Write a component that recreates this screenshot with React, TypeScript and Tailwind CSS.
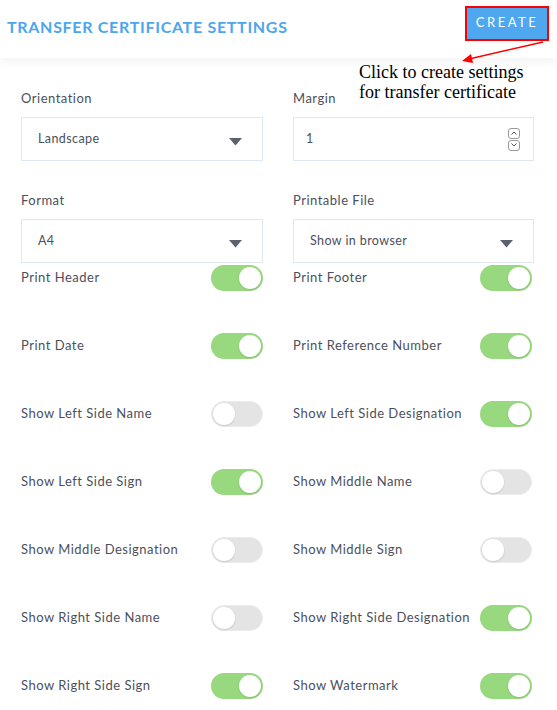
import React, { useState } from 'react';

const FONT = { fontFamily: 'Lato, "Open Sans", sans-serif' };

const TOGGLES: [string, boolean, string, boolean][] = [
  ['Print Header', true, 'Print Footer', true],
  ['Print Date', true, 'Print Reference Number', true],
  ['Show Left Side Name', false, 'Show Left Side Designation', true],
  ['Show Left Side Sign', true, 'Show Middle Name', false],
  ['Show Middle Designation', false, 'Show Middle Sign', false],
  ['Show Right Side Name', false, 'Show Right Side Designation', true],
  ['Show Right Side Sign', true, 'Show Watermark', true]
];

const Toggle: React.FC<{ on: boolean; onClick: () => void }> = ({ on, onClick }) => (
  <button
    type="button"
    onClick={onClick}
    className={
      on
        ? 'flex h-[26px] w-[52px] items-center justify-end rounded-full bg-[#98d87f] p-[2px]'
        : 'flex h-[26px] w-[52px] items-center justify-start rounded-full border border-[#ececec] bg-[#e4e4e4] p-[1px]'
    }
  >
    <span className="h-[22px] w-[22px] rounded-full bg-white shadow-[0_1px_2px_rgba(0,0,0,0.12)]" />
  </button>
);

const Caret = () => (
  <svg width="13" height="8" viewBox="0 0 13 8">
    <path d="M0 0 L13 0 L6.5 7.5 Z" fill="#5b616d" />
  </svg>
);

const SelectBox: React.FC<{ value: string }> = ({ value }) => (
  <div className="flex h-[44px] items-center justify-between border border-[#dfe7f3] bg-white pl-[16px] pr-[20px] text-[12.5px] tracking-[0.4px] text-[#4b505c]">
    <span>{value}</span>
    <span className="mt-[6px]">
      <Caret />
    </span>
  </div>
);

export default function App() {
  const [flags, setFlags] = useState(TOGGLES);

  const flip = (row: number, col: 1 | 3) => {
    const next = flags.map((r) => [...r] as [string, boolean, string, boolean]);
    next[row][col] = !next[row][col];
    setFlags(next);
  };

  return (
    <div className="relative h-[710px] w-[557px] overflow-hidden bg-white" style={FONT}>
      <header className="relative z-10 flex h-[58px] items-center justify-between bg-white pl-[7px] pr-[8px] shadow-[0_4px_10px_rgba(0,0,0,0.05)]">
        <h1 className="mb-[4px] text-[16px] font-bold tracking-[0.7px] text-[#4ca6ee]">TRANSFER CERTIFICATE SETTINGS</h1>
        <div className="mb-[12px] border-2 border-[#ff0000]">
          <button
            type="button"
            className="flex h-[31px] w-[80px] items-center justify-center bg-[#4ea7ef] text-[13px] tracking-[2.5px] text-white"
          >
            CREATE
          </button>
        </div>
      </header>

      <main className="grid grid-cols-[242px_241px] gap-x-[30px] px-[21px] pt-[31px] tracking-[0.5px] text-[#4b505c]">
        <div>
          <div className="mb-[10px] text-[13px] leading-[18px]">Orientation</div>
          <SelectBox value="Landscape" />
        </div>
        <div>
          <div className="mb-[10px] text-[13px] leading-[18px]">Margin</div>
          <div className="flex h-[44px] items-center justify-between border border-[#dfe7f3] bg-white pl-[12px] pr-[13px] text-[12.5px]">
            <span>1</span>
            <div className="flex flex-col gap-[1px]">
              <span className="flex h-[11px] w-[12px] items-center justify-center rounded-[3px] border border-[#9a9a9a]">
                <svg width="6" height="4" viewBox="0 0 6 4">
                  <path d="M0.5 3.5 L3 1 L5.5 3.5" fill="none" stroke="#555" strokeWidth="1" />
                </svg>
              </span>
              <span className="flex h-[11px] w-[12px] items-center justify-center rounded-[3px] border border-[#9a9a9a]">
                <svg width="6" height="4" viewBox="0 0 6 4">
                  <path d="M0.5 0.5 L3 3 L5.5 0.5" fill="none" stroke="#555" strokeWidth="1" />
                </svg>
              </span>
            </div>
          </div>
        </div>

        <div className="mt-[30px]">
          <div className="mb-[10px] text-[13px] leading-[18px]">Format</div>
          <SelectBox value="A4" />
        </div>
        <div className="mt-[30px]">
          <div className="mb-[10px] text-[13px] leading-[18px]">Printable File</div>
          <SelectBox value="Show in browser" />
        </div>

        {flags.map(([l, lOn, r, rOn], i) => (
          <React.Fragment key={l}>
            <div className={`flex h-[26px] items-center justify-between ${i === 0 ? 'mt-[2px]' : 'mt-[42px]'}`}>
              <span className="text-[13px]">{l}</span>
              <Toggle on={lOn} onClick={() => flip(i, 1)} />
            </div>
            <div className={`flex h-[26px] items-center justify-between pr-[2px] ${i === 0 ? 'mt-[2px]' : 'mt-[42px]'}`}>
              <span className="text-[13px]">{r}</span>
              <Toggle on={rOn} onClick={() => flip(i, 3)} />
            </div>
          </React.Fragment>
        ))}
      </main>

      <svg className="absolute left-[455px] top-[38px] z-20" width="95" height="30" viewBox="0 0 95 30">
        <line x1="88" y1="4" x2="14" y2="21" stroke="#ff0000" strokeWidth="1.5" />
        <path d="M7 23 L16 16 L18 25 Z" fill="#ff0000" />
      </svg>
      <div
        className="absolute left-[359px] top-[62px] z-20 text-[18px] leading-[20px] text-black"
        style={{ fontFamily: '"Liberation Serif", serif' }}
      >
        Click to create settings
        <br />
        for transfer certificate
      </div>
    </div>
  );
}
